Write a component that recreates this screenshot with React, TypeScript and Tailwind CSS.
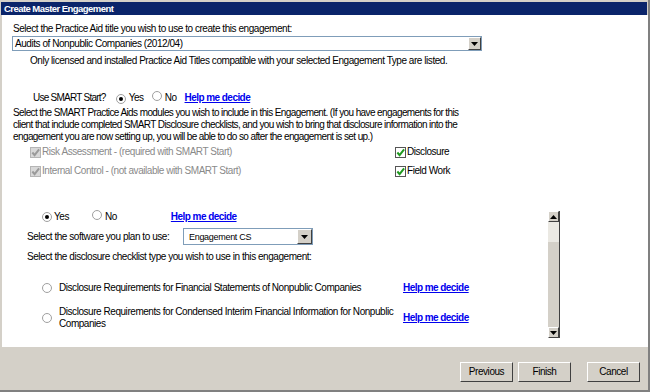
import React from "react";

function Radio({ checked = false }: { checked?: boolean }) {
	return (
		<span className="relative inline-flex w-[10px] h-[10px] shrink-0 rounded-full border border-[#a0a0a0] bg-white items-center justify-center">
			{checked && <span className="w-[4px] h-[4px] rounded-full bg-black"></span>}
		</span>
	);
}

function Check({ disabled = false }: { disabled?: boolean }) {
	return (
		<span
			className={
				disabled
					? "inline-flex w-[11px] h-[11px] shrink-0 border border-[#b5b5b5] bg-[#d8d8d8] items-center justify-center"
					: "inline-flex w-[11px] h-[11px] shrink-0 border border-[#555] bg-white items-center justify-center"
			}
		>
			<svg width="9" height="9" viewBox="0 0 10 10">
				<path
					d="M1.5 5 L4 8 L9 1.5"
					fill="none"
					stroke={disabled ? "#9a9a9a" : "#1f9a1f"}
					strokeWidth="2.2"
				/>
			</svg>
		</span>
	);
}

function DropArrow({ size = 14 }: { size?: number }) {
	return (
		<span
			className="flex items-center justify-center bg-[#d4d0c8] border border-t-white border-l-white border-r-[#404040] border-b-[#404040]"
			style={{ width: size, height: size }}
		>
			<svg width="7" height="4" viewBox="0 0 7 4">
				<path d="M0 0 H7 L3.5 4 Z" fill="#000" />
			</svg>
		</span>
	);
}

function UpArrow() {
	return (
		<span className="flex w-[11px] h-[11px] items-center justify-center bg-[#d4d0c8] border border-t-white border-l-white border-r-[#404040] border-b-[#404040]">
			<svg width="7" height="4" viewBox="0 0 7 4">
				<path d="M0 4 H7 L3.5 0 Z" fill="#000" />
			</svg>
		</span>
	);
}

function Help() {
	return <span className="font-bold text-[#0000ee] underline tracking-[-0.55px]">Help me decide</span>;
}

function Btn({ children }: { children: React.ReactNode }) {
	return (
		<button className="w-[53px] h-[20px] bg-[#d4d0c8] border border-t-white border-l-white border-r-[#404040] border-b-[#404040] text-[10px] text-black leading-none">
			{children}
		</button>
	);
}

export default function App() {
	return (
		<div className="w-[650px] h-[392px] bg-[#d4d0c8] flex flex-col border-r-2 border-b-2 border-[#808080] text-[10px] leading-[12px] tracking-[-0.45px] whitespace-nowrap text-black font-['Liberation_Sans',Arial,sans-serif]">
			<div className="h-[2px]"></div>
			<div className="h-[13px] bg-[#0a246a] text-white font-bold text-[9.5px] pl-[3px] leading-[13px] mx-[1px] tracking-[-0.55px]">Create Master Engagement</div>
			<div className="h-[332px] bg-white ml-[2px] flex flex-col overflow-hidden">
				<div className="pl-[11px] mt-[8px]">Select the Practice Aid title you wish to use to create this engagement:</div>
				<div className="ml-[10px] mt-[1px] w-[470px] h-[15px] border border-[#7f9db9] flex items-center justify-between">
					<span className="pl-[2px]">Audits of Nonpublic Companies (2012/04)</span>
					<DropArrow size={13} />
				</div>
				<div className="pl-[28px] mt-[4px]">Only licensed and installed Practice Aid Titles compatible with your selected Engagement Type are listed.</div>
				<div className="pl-[31px] mt-[24px] flex items-center">
					<span className="tracking-[-0.75px]">Use SMART Start?</span>
					<span className="ml-[10px]"><Radio checked /></span>
					<span className="ml-[3px]">Yes</span>
					<span className="ml-[8px]"><Radio /></span>
					<span className="ml-[3px]">No</span>
					<span className="ml-[8px]"><Help /></span>
				</div>
				<div className="pl-[11px] mt-[3px] tracking-[-0.6px]">
					Select the SMART Practice Aids modules you wish to include in this Engagement. (If you have engagements for this
					<br />
					client that include completed SMART Disclosure checklists, and you wish to bring that disclosure information into the
					<br />
					engagement you are now setting up, you will be able to do so after the engagement is set up.)
				</div>
				<div className="flex mt-[3px]">
					<div className="pl-[28px] w-[393px] flex flex-col gap-[7px] text-[#8a8a8a]">
						<div className="flex items-center gap-[1px]"><Check disabled /><span>Risk Assessment - (required with SMART Start)</span></div>
						<div className="flex items-center gap-[1px]"><Check disabled /><span>Internal Control - (not available with SMART Start)</span></div>
					</div>
					<div className="flex flex-col gap-[7px]">
						<div className="flex items-center gap-[1px]"><Check /><span>Disclosure</span></div>
						<div className="flex items-center gap-[1px]"><Check /><span>Field Work</span></div>
					</div>
				</div>
				<div className="flex mt-[33px]">
					<div className="w-[546px] flex flex-col">
						<div className="pl-[40px] flex items-center">
							<Radio checked />
							<span className="ml-[2px]">Yes</span>
							<span className="ml-[23px]"><Radio /></span>
							<span className="ml-[3px]">No</span>
							<span className="ml-[54px]"><Help /></span>
						</div>
						<div className="pl-[25px] mt-[5px] flex items-center">
							<span className="w-[156px]">Select the software you plan to use:</span>
							<div className="w-[130px] h-[17px] border border-[#7f9db9] flex items-center justify-between text-[9px] tracking-[-0.3px]">
								<span className="pl-[5px]">Engagement CS</span>
								<DropArrow size={15} />
							</div>
						</div>
						<div className="pl-[25px] mt-[6px]">Select the disclosure checklist type you wish to use in this engagement:</div>
						<div className="pl-[40px] mt-[19px] flex items-center">
							<Radio />
							<span className="ml-[7px] w-[344px]">Disclosure Requirements for Financial Statements of Nonpublic Companies</span>
							<Help />
						</div>
						<div className="pl-[40px] mt-[12px] flex items-center">
							<Radio />
							<span className="ml-[7px] w-[344px]">
								Disclosure Requirements for Condensed Interim Financial Information for Nonpublic
								<br />
								Companies
							</span>
							<Help />
						</div>
					</div>
					<div className="mt-[1px] w-[12px] h-[127px] flex flex-col bg-[#d4d0c8] border-r border-[#404040]">
						<UpArrow />
						<div className="h-[20px] bg-[#ebe9e3]"></div>
						<div className="flex-1 bg-[#d4d0c8]"></div>
						<DropArrow size={11} />
					</div>
				</div>
			</div>
			<div className="flex-1 flex items-start justify-end pt-[15px] pr-[8px] gap-[5px]">
				<Btn>Previous</Btn>
				<Btn>Finish</Btn>
				<span className="ml-[11px]"><Btn>Cancel</Btn></span>
			</div>
		</div>
	);
}
